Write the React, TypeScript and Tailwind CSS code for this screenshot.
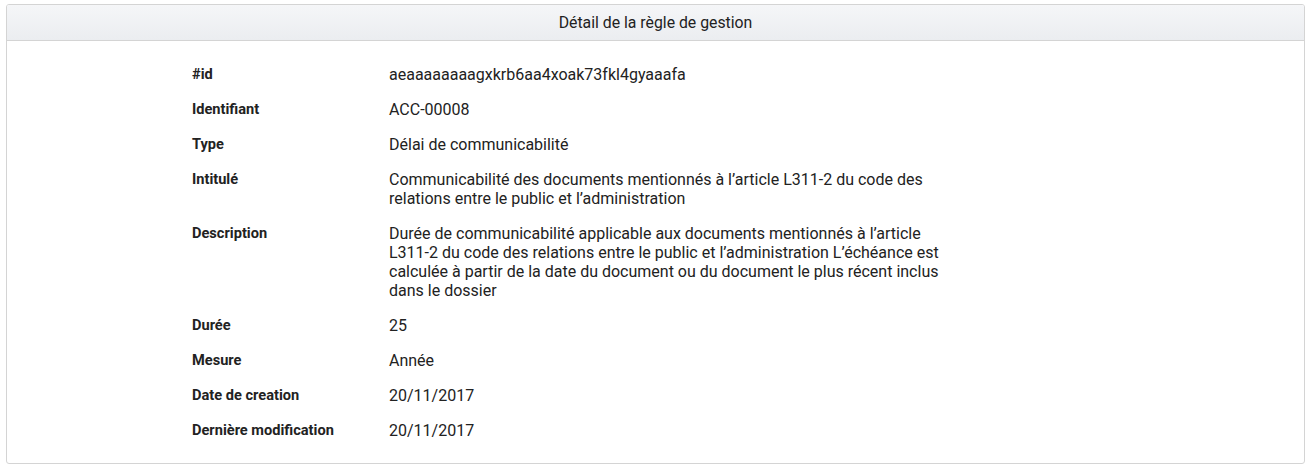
const rows: { label: string; value: string }[] = [
  { label: "#id", value: "aeaaaaaaaagxkrb6aa4xoak73fkl4gyaaafa" },
  { label: "Identifiant", value: "ACC-00008" },
  { label: "Type", value: "Délai de communicabilité" },
  {
    label: "Intitulé",
    value:
      "Communicabilité des documents mentionnés à l’article L311-2 du code des relations entre le public et l’administration",
  },
  {
    label: "Description",
    value:
      "Durée de communicabilité applicable aux documents mentionnés à l’article L311-2 du code des relations entre le public et l’administration L’échéance est calculée à partir de la date du document ou du document le plus récent inclus dans le dossier",
  },
  { label: "Durée", value: "25" },
  { label: "Mesure", value: "Année" },
  { label: "Date de creation", value: "20/11/2017" },
  { label: "Dernière modification", value: "20/11/2017" },
];

export default function App() {
  return (
    <div className="bg-white pt-[4px] pl-[6px] pr-[7px] pb-[7px]" style={{ fontFamily: "Roboto, 'Liberation Sans', sans-serif" }}>
      <div className="border border-[#d4d4d4] rounded-[3px] overflow-hidden">
        <div className="h-[36px] flex items-center justify-center border-b border-[#d4d4d4] bg-gradient-to-b from-[#f5f6f8] to-[#ebedf0] text-[15.8px] text-[#222]">
          Détail de la règle de gestion
        </div>
        <div className="pt-[23.5px] pb-[22.5px] pl-[185px] flex flex-col gap-[16.1px]">
          {rows.map((r) => (
            <div key={r.label} className="flex">
              <div className="w-[197px] shrink-0 text-[14.6px] font-bold leading-[19px] text-[#222]">
                {r.label}
              </div>
              <div className="w-[562px] text-[16px] leading-[19px] text-[#222]">{r.value}</div>
            </div>
          ))}
        </div>
      </div>
    </div>
  );
}
